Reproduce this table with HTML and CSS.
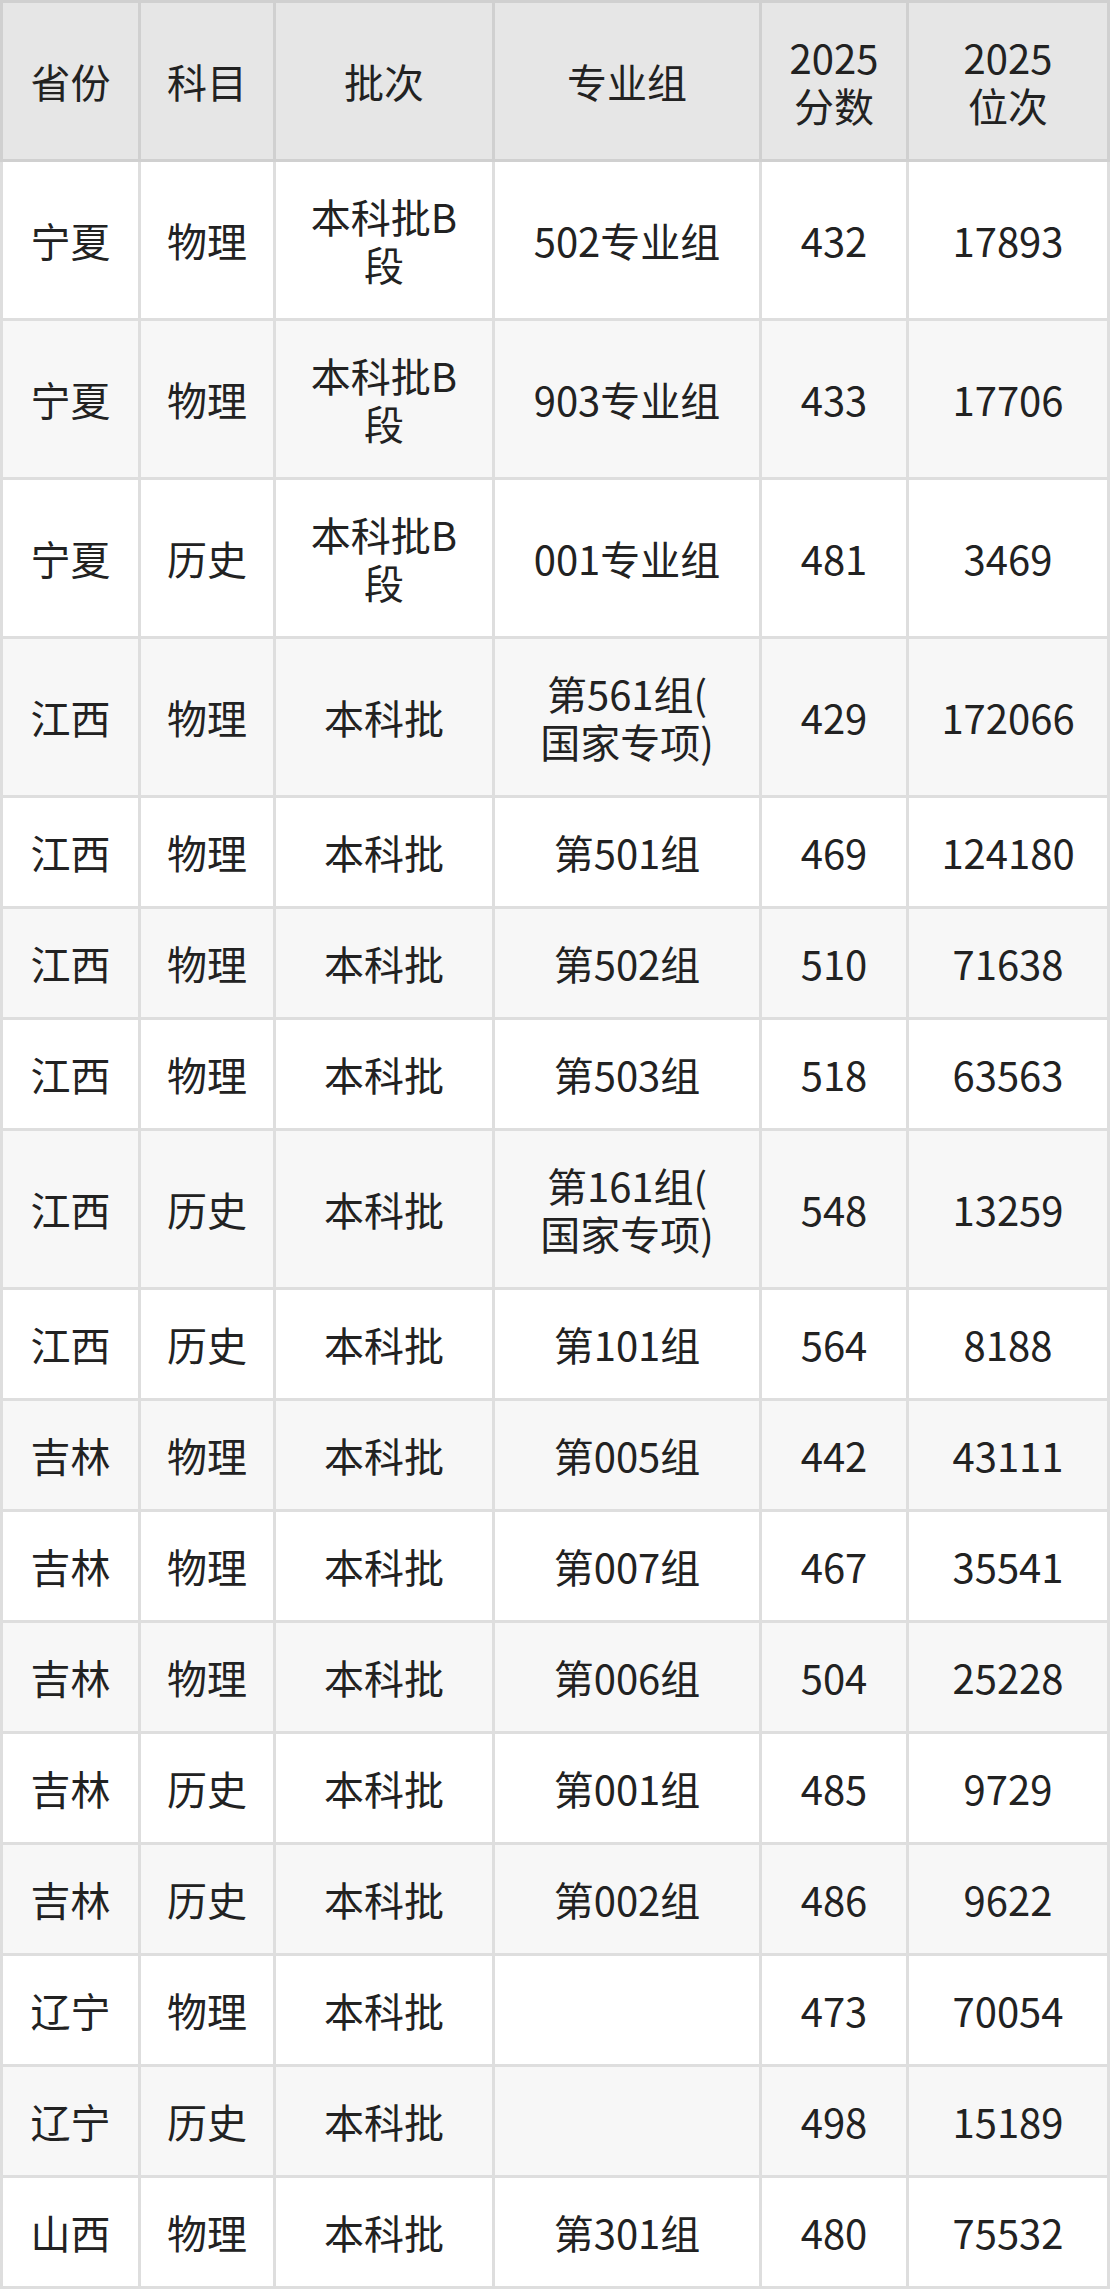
FILE: index.html
```html
<!DOCTYPE html>
<html lang="zh-CN">
<head>
<meta charset="utf-8">
<title>分数线</title>
<link rel="stylesheet" href="styles.css">
</head>
<body>
<table class="score-table">
  <colgroup>
    <col class="c-prov">
    <col class="c-subj">
    <col class="c-batch">
    <col class="c-group">
    <col class="c-score">
    <col class="c-rank">
  </colgroup>
  <thead>
    <tr>
      <th>省份</th>
      <th>科目</th>
      <th>批次</th>
      <th>专业组</th>
      <th>2025<br>分数</th>
      <th>2025<br>位次</th>
    </tr>
  </thead>
  <tbody>
    <tr><td>宁夏</td><td>物理</td><td>本科批B<br>段</td><td>502专业组</td><td>432</td><td>17893</td></tr>
    <tr><td>宁夏</td><td>物理</td><td>本科批B<br>段</td><td>903专业组</td><td>433</td><td>17706</td></tr>
    <tr><td>宁夏</td><td>历史</td><td>本科批B<br>段</td><td>001专业组</td><td>481</td><td>3469</td></tr>
    <tr><td>江西</td><td>物理</td><td>本科批</td><td>第561组(<br>国家专项)</td><td>429</td><td>172066</td></tr>
    <tr><td>江西</td><td>物理</td><td>本科批</td><td>第501组</td><td>469</td><td>124180</td></tr>
    <tr><td>江西</td><td>物理</td><td>本科批</td><td>第502组</td><td>510</td><td>71638</td></tr>
    <tr><td>江西</td><td>物理</td><td>本科批</td><td>第503组</td><td>518</td><td>63563</td></tr>
    <tr><td>江西</td><td>历史</td><td>本科批</td><td>第161组(<br>国家专项)</td><td>548</td><td>13259</td></tr>
    <tr><td>江西</td><td>历史</td><td>本科批</td><td>第101组</td><td>564</td><td>8188</td></tr>
    <tr><td>吉林</td><td>物理</td><td>本科批</td><td>第005组</td><td>442</td><td>43111</td></tr>
    <tr><td>吉林</td><td>物理</td><td>本科批</td><td>第007组</td><td>467</td><td>35541</td></tr>
    <tr><td>吉林</td><td>物理</td><td>本科批</td><td>第006组</td><td>504</td><td>25228</td></tr>
    <tr><td>吉林</td><td>历史</td><td>本科批</td><td>第001组</td><td>485</td><td>9729</td></tr>
    <tr><td>吉林</td><td>历史</td><td>本科批</td><td>第002组</td><td>486</td><td>9622</td></tr>
    <tr><td>辽宁</td><td>物理</td><td>本科批</td><td></td><td>473</td><td>70054</td></tr>
    <tr><td>辽宁</td><td>历史</td><td>本科批</td><td></td><td>498</td><td>15189</td></tr>
    <tr><td>山西</td><td>物理</td><td>本科批</td><td>第301组</td><td>480</td><td>75532</td></tr>
  </tbody>
</table>
</body>
</html>
```

FILE: styles.css
```css
html, body {
  margin: 0;
  padding: 0;
  background: #ffffff;
}

body {
  font-family: "Noto Sans CJK SC", "Noto Sans", sans-serif;
  color: #222222;
}

.score-table {
  width: 1110px;
  border-collapse: collapse;
  table-layout: fixed;
  font-size: 40px;
  line-height: 48px;
}

.c-prov { width: 138px; }
.c-subj { width: 135px; }
.c-batch { width: 219px; }
.c-group { width: 267px; }
.c-score { width: 147px; }
.c-rank { width: 201px; }

.score-table th,
.score-table td {
  padding: 30px 0;
  text-align: center;
  vertical-align: middle;
  font-weight: 400;
  border: 3px solid #dedede;
}

.score-table th {
  background: #e6e6e6;
  border-color: #d0d0d0;
}

.score-table tbody tr:nth-child(odd) {
  background: #ffffff;
}

.score-table tbody tr:nth-child(even) {
  background: #f7f7f7;
}
```
